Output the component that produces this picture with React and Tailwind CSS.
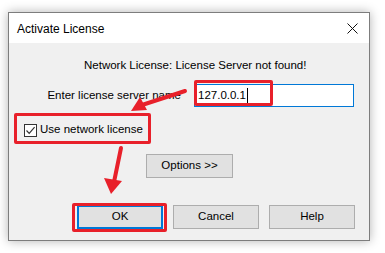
export default function App() {
  const font = { fontFamily: '"Liberation Sans", Arial, sans-serif' };
  return (
    <div
      className="relative w-[385px] h-[253px] bg-white pt-[12px] pl-[8px] text-[11.5px] text-black"
      style={font}>
      {/* Dialog window */}
      <div className="w-[362px] border border-[#7d7d7d] bg-[#f0f0f0] shadow-[0_0_10px_rgba(0,0,0,0.3)]">
        {/* Title bar */}
        <div className="h-[30px] bg-white flex items-center justify-between pl-[8px] pr-[10px]">
          <span className="text-[12px] leading-none pt-[1px]">Activate License</span>
          <svg width="11" height="11" viewBox="0 0 11 11" className="mr-[1px]">
            <path d="M0.5 0.5 L10.5 10.5 M10.5 0.5 L0.5 10.5" stroke="#111" strokeWidth="1" />
          </svg>
        </div>

        {/* Body */}
        <div className="h-[197px] flex flex-col">
          <div className="pt-[14px] pl-[75px] h-[30px] leading-[16px]">
            Network License: License Server not found!
          </div>

          <div className="mt-[11px] flex items-center h-[23px]">
            <span className="w-[173px] text-right pr-[1px]">Enter license server name</span>
            <div className="ml-[12px] w-[160px] h-[23px] bg-white border border-[#0078d7] flex items-center pl-[3px]">
              <span>127.0.0.1</span>
              <span className="w-px h-[15px] bg-black ml-[1px]" />
            </div>
          </div>

          <div className="mt-[16px] pl-[15px] flex items-center gap-[3px] h-[14px]">
            <div className="w-[13px] h-[13px] border border-[#333] bg-white flex items-center justify-center">
              <svg width="11" height="11" viewBox="0 0 11 11">
                <path d="M1.5 5.5 L4.2 8.3 L9.6 2.2" stroke="#333" strokeWidth="1.2" fill="none" />
              </svg>
            </div>
            <span>Use network license</span>
          </div>

          <div className="mt-[17px] pl-[137px]">
            <button className="w-[87px] h-[24px] bg-[#e1e1e1] border border-[#adadad]">
              Options &gt;&gt;
            </button>
          </div>

          <div className="mt-[27px] pl-[68px] flex gap-[10px]">
            <button className="w-[86px] h-[24px] bg-[#e1e1e1] border-2 border-[#0078d7]">OK</button>
            <button className="w-[86px] h-[24px] bg-[#e1e1e1] border border-[#adadad]">Cancel</button>
            <button className="w-[86px] h-[24px] bg-[#e1e1e1] border border-[#adadad]">Help</button>
          </div>
        </div>
      </div>

      {/* Annotation highlight boxes */}
      <div className="absolute left-[194px] top-[80px] w-[79px] h-[26px] border-[3px] border-[#e8202a] rounded-[2px]" />
      <div className="absolute left-[14px] top-[113px] w-[137px] h-[31px] border-[3px] border-[#e8202a] rounded-[2px]" />
      <div className="absolute left-[72px] top-[203px] w-[95px] h-[29px] border-[3px] border-[#e8202a] rounded-[2px]" />

      {/* Annotation arrows */}
      <svg className="absolute left-0 top-0" width="385" height="253" viewBox="0 0 385 253">
        <path d="M185 91 L142 105" stroke="#e8202a" strokeWidth="4" strokeLinecap="round" />
        <polygon points="131,111 140,97 147,110" fill="#e8202a" />
        <path d="M121 148 L114 182" stroke="#e8202a" strokeWidth="4" strokeLinecap="round" />
        <polygon points="111,194 104,178 122,181" fill="#e8202a" />
      </svg>
    </div>
  );
}
